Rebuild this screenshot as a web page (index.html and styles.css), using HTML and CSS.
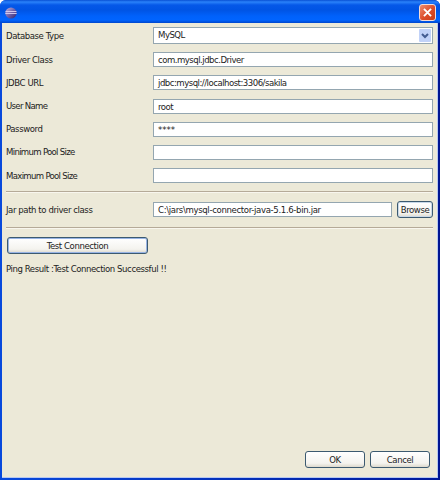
FILE: index.html
```
<!DOCTYPE html>
<html>
  <head>
    <meta charset="utf-8">
    <title>Database connection</title>
    <link rel="stylesheet" href="styles.css">
  </head>
  <body>
    <div class="window">
      <header class="titlebar">
        <svg class="logo" viewBox="0 0 12 12">
          <defs>
            <linearGradient id="ball" x1="0" y1="0" x2="1" y2="1">
              <stop offset="0" stop-color="#c4b4dc" />
              <stop offset="0.5" stop-color="#7262ac" />
              <stop offset="1" stop-color="#30246c" />
            </linearGradient>
          </defs>
          <circle cx="6" cy="6" r="5.6" fill="url(#ball)" />
          <path d="M0.5 4.5H11.5M0.3 6.5H11.7" stroke="#d9d0f0" stroke-width="0.9" />
        </svg>
        <button class="close">
          <svg viewBox="0 0 16 16">
            <path d="M4.2 4.2L11.8 11.8M11.8 4.2L4.2 11.8" stroke="#fff" stroke-width="2" />
          </svg>
        </button>
      </header>
      <main>
        <div class="row first">
          <label>Database Type</label>
          <div class="field select">
            <span>MySQL</span>
            <div class="arrow">
              <svg viewBox="0 0 12 13">
                <path d="M3 5L6 8L9 5" fill="none" stroke="#435c91" stroke-width="2" />
              </svg>
            </div>
          </div>
        </div>
        <div class="row"><label>Driver Class</label><div class="field">com.mysql.jdbc.Driver</div></div>
        <div class="row"><label>JDBC URL</label><div class="field">jdbc:mysql://localhost:3306/sakila</div></div>
        <div class="row"><label class="tight">User Name</label><div class="field">root</div></div>
        <div class="row"><label>Password</label><div class="field password">****</div></div>
        <div class="row"><label class="tight">Minimum Pool Size</label><div class="field"></div></div>
        <div class="row"><label class="tight">Maximum Pool Size</label><div class="field"></div></div>
        <div class="jar">
          <label>Jar path to driver class</label>
          <div class="field path">C:\jars\mysql-connector-java-5.1.6-bin.jar</div>
          <button class="btn browse">Browse</button>
        </div>
        <button class="btn test">Test Connection</button>
        <p class="result">Ping Result :Test Connection Successful !!</p>
      </main>
      <footer>
        <button class="btn">OK</button>
        <button class="btn">Cancel</button>
      </footer>
    </div>
  </body>
</html>
```
FILE: styles.css
```
* {
  box-sizing: border-box;
}
body {
  margin: 0;
  background: #fff;
  font: 9.5px/12px "DejaVu Sans Condensed", "DejaVu Sans", sans-serif;
  font-stretch: condensed;
  letter-spacing: -0.42px;
  color: #222;
}
.window {
  display: flex;
  flex-direction: column;
  width: 440px;
  height: 480px;
  padding: 0 2px 2px 2px;
  border-radius: 6px 6px 0 0;
  background: linear-gradient(90deg, #0849dc 0, #0849dc 2px, #001a9c 437px, #00128c 440px);
}
.titlebar {
  display: flex;
  align-items: center;
  justify-content: space-between;
  height: 23px;
  margin: 0 -2px;
  padding: 2px 4px 0 5px;
  border-radius: 6px 6px 0 0;
  background: linear-gradient(#0850d4 0, #2a82fa 2px, #0558e8 5px, #0054e4 10px, #0061fb 16px, #0064ff 20px, #0046cc 23px);
}
.logo {
  width: 12px;
  height: 12px;
}
.close {
  width: 17px;
  height: 17px;
  padding: 0;
  border: 1px solid #f5dcd6;
  border-radius: 3px;
  background: linear-gradient(135deg, #ee8d70, #dc4c28 55%, #c93c18);
}
.close svg {
  display: block;
}
main {
  flex: 1;
  padding: 4px 4px 0 4px;
  background: #ece9d8;
  border-right: 1px solid #b7c8f0;
}
.row {
  display: flex;
  align-items: center;
  height: 15px;
  margin-bottom: 8.2px;
}
.row.first {
  height: 17px;
}
label {
  width: 147px;
}
.tight {
  letter-spacing: -0.68px;
}
.field {
  flex: 1;
  height: 15px;
  padding: 1px 4px;
  border: 1px solid #94a6b0;
  background: #fff;
  letter-spacing: -0.5px;
  white-space: nowrap;
}
.select {
  display: flex;
  justify-content: space-between;
  height: 17px;
  padding: 1px 1px 1px 4px;
}
.arrow {
  width: 12px;
  height: 13px;
  border-radius: 1px;
  background: #c1d2f8;
}
.arrow svg {
  display: block;
}
.password {
  line-height: 11px;
  letter-spacing: 0;
}
.path {
  letter-spacing: -0.34px;
}
.jar {
  display: flex;
  align-items: center;
  height: 37px;
  border: solid #b5aa98;
  border-width: 1px 0;
  box-shadow: 0 1px #f8f6ee, inset 0 1px #f8f6ee;
}
.btn {
  width: 60px;
  height: 17px;
  padding: 0;
  border: 1px solid #3c5a70;
  border-radius: 3px;
  background: linear-gradient(#fff, #f4f3ee 75%, #dcd8cc);
  font: inherit;
  letter-spacing: inherit;
  color: inherit;
}
.browse {
  width: 36px;
  margin-left: 5px;
  box-shadow: inset 0 0 0 1px #c8d8e8;
}
.test {
  display: block;
  width: 141px;
  margin: 9px 0 0 1px;
  box-shadow: inset 0 0 0 1px #98b4e4;
}
.result {
  margin: 9px 0 0;
}
footer {
  display: flex;
  justify-content: flex-end;
  gap: 5px;
  height: 27px;
  padding-right: 7px;
  background: #ece9d8;
  border-right: 1px solid #b7c8f0;
  border-bottom: 1px solid #b7c8f0;
}
```
